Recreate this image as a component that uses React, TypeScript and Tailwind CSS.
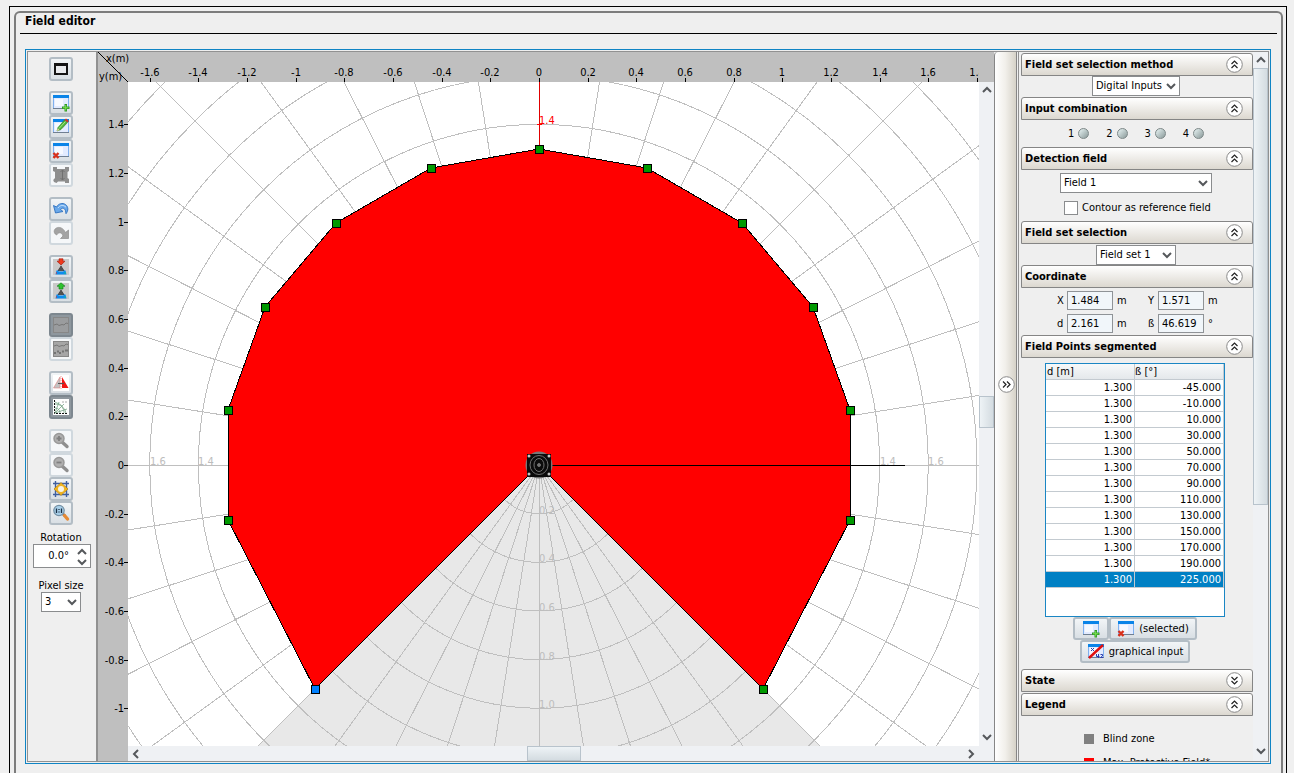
import { useState, type ReactNode } from "react"
import { clsx } from "clsx"

// pixels per metre, and the scanner position on the plot
const SCALE = 243.3
const CX = 411
const CY = 383

const POINT_ANGLES = [-45, -10, 10, 30, 50, 70, 90, 110, 130, 150, 170, 190, 225]
const RINGS = [0.2, 0.4, 0.6, 0.8, 1, 1.2, 1.4, 1.6, 1.8, 2, 2.2, 2.4]
const X_TICKS = [-1.6, -1.4, -1.2, -1, -0.8, -0.6, -0.4, -0.2, 0, 0.2, 0.4, 0.6, 0.8, 1, 1.2, 1.4, 1.6, 1.8]
const Y_TICKS = [1.4, 1.2, 1, 0.8, 0.6, 0.4, 0.2, 0, -0.2, -0.4, -0.6, -0.8, -1]

function polar(d: number, deg: number) {
  const a = (deg * Math.PI) / 180
  return [Math.round(CX + d * SCALE * Math.cos(a)), Math.round(CY - d * SCALE * Math.sin(a))]
}

/* ---------- icons ---------- */

function WindowIcon({ children }: { children?: ReactNode }) {
  return (
    <svg width="18" height="18" viewBox="0 0 18 18" aria-hidden="true">
      <rect x="1.5" y="2.5" width="15" height="12" fill="#e2ebff" stroke="#7fb0ee" />
      <rect x="3" y="5" width="8" height="7" fill="#fff" opacity=".7" />
      <rect x="1" y="1" width="16" height="3" fill="#0a84e8" />
      <rect x="1" y="14" width="16" height="1" fill="#6f7f92" />
      {children}
    </svg>
  )
}

function AddIcon() {
  return (
    <WindowIcon>
      <path d="M12.5 10H15v2.500h2.500V15H15v2.500h-2.500V15H10v-2.500h2.500z" fill="#2f9a25" />
      <path d="M13.2 11h1v2.200h2.300v1h-2.300v2.300h-1v-2.300H11v-1h2.200z" fill="#7be04f" />
    </WindowIcon>
  )
}

function EditIcon() {
  return (
    <WindowIcon>
      <path d="M5 13l1-3.500L12.500 2l3 2.500L9 11.500z" fill="#4fb53a" stroke="#2e7f24" strokeWidth=".6" />
      <path d="M7 10.500L13.500 3.500" stroke="#a6ea88" />
      <path d="M5 13l.8-2.500 1.700 1.400z" fill="#f4d8a0" />
      <path d="M12.500 2L14 .5l3 2.500-1.500 1.500z" fill="#cf3a2c" />
    </WindowIcon>
  )
}

function DeleteIcon() {
  return (
    <WindowIcon>
      <path d="M1.500 11l5 5M6.500 11l-5 5" stroke="#d8301c" strokeWidth="2.400" />
    </WindowIcon>
  )
}

function MaximizeIcon() {
  return (
    <svg width="18" height="18" viewBox="0 0 18 18" aria-hidden="true" shapeRendering="crispEdges">
      <rect x="4" y="5" width="10" height="8" fill="#e9ebee" />
      <path d="M2 3h14v12H2zM4 6v7h10V6z" fill="#151515" fillRule="evenodd" />
    </svg>
  )
}

function ResizeIcon() {
  return (
    <svg width="18" height="18" viewBox="0 0 18 18" aria-hidden="true">
      <path d="M1 1h4v2h8V1h4v4l-1.500 1v6l1.500 1v4h-4v-1.500H6L4.500 17 2 16l-.8-2L3 12V6L1 5z" fill="#8e8e8e" />
      <path d="M10.500 4v10M8.500 6l2-2 2 2M8.500 12l2 2 2-2" fill="none" stroke="#707070" />
    </svg>
  )
}

function UndoIcon() {
  return (
    <svg width="18" height="18" viewBox="0 0 18 18" aria-hidden="true">
      <path d="M1.500 5.500l2 7.500 7.500-1.500-2.500-2c1.500-2 4-1.800 5 1.200l.5 3c2.500-3 2.500-7-.5-9.200C10.500 2.500 6.500 3.500 4.500 7z" fill="#69a8ea" stroke="#2c6fbe" strokeWidth=".9" />
      <path d="M6 8c2-3 5.500-3.500 8-.8" fill="none" stroke="#c4e0fb" />
    </svg>
  )
}

function RedoIcon() {
  return (
    <svg width="18" height="18" viewBox="0 0 18 18" aria-hidden="true">
      <path d="M16.500 6v8.500H8.500l2.500-2.500C10 8.500 7 7.500 4.500 11 1.500 9 1.500 6 4 4.200c3-1.700 7-.7 9.500 4.300z" fill="#a3a3a3" stroke="#8c8c8c" strokeWidth=".7" />
    </svg>
  )
}

function DeviceIcon({ up }: { up?: boolean }) {
  return (
    <svg width="18" height="18" viewBox="0 0 18 18" aria-hidden="true">
      <rect x="1" y="1" width="16" height="16" fill="#c9c9c9" />
      {up ? (
        <path d="M9 .8l4 3.400h-2V7H7V4.200H5z" fill="#2fc32f" stroke="#0c7a14" strokeWidth=".6" />
      ) : (
        <path d="M7 .8h4v2.400h2L9 7 5 3.200h2z" fill="#ee3a1c" stroke="#a3180b" strokeWidth=".6" />
      )}
      <path d="M9 7.500L5.500 13h7z" fill="#222" />
      <path d="M7.500 10h3M6.500 12h5" stroke="#9a9a9a" strokeWidth=".8" />
      <path d="M4.500 12.500h2v1h5v-1h2l1 4h-11z" fill="#0c8cf0" />
      <path d="M4 15h1" stroke="#e22" />
      <path d="M12.500 15h1" stroke="#2e2" />
    </svg>
  )
}

function CurveIcon({ dots }: { dots?: boolean }) {
  return (
    <svg width="18" height="18" viewBox="0 0 18 18" aria-hidden="true">
      <rect x="1.500" y="1.500" width="15" height="15" fill={dots ? "#a6a6a6" : "#9a9c9e"} stroke="#878787" />
      <path d="M2 9l3-1 2 1.500 3-1 2 .500 2-2 2 .500" fill="none" stroke="#777" transform={dots ? "translate(0 -3)" : undefined} />
      {dots && <path d="M2 13h2M5 11.500h2M7 13h2M10 11.500h2M13 10.500h3" stroke="#747474" strokeWidth="2" />}
    </svg>
  )
}

function MirrorIcon() {
  return (
    <svg width="18" height="18" viewBox="0 0 18 18" aria-hidden="true">
      <rect x="1" y="1" width="16" height="16" fill="#fff" />
      <path d="M8 3v11H1.500z" fill="#c2c2c2" stroke="#e08080" strokeWidth=".6" />
      <path d="M10 3v11h6.500z" fill="#f01414" />
      <path d="M6 9.500h6" stroke="#555" />
      <path d="M9 2v14" stroke="#e99" strokeDasharray="1 1" />
    </svg>
  )
}

function ScanGridIcon() {
  return (
    <svg width="18" height="18" viewBox="0 0 18 18" aria-hidden="true">
      <rect x="1" y="1" width="16" height="16" fill="#fff" />
      <path d="M2.500 2v13.500H16" fill="none" stroke="#111" strokeDasharray="2 1" />
      <path d="M3 15L15 11M3 15L12 6M3 15L7 4M3 6c6 0 9 4 9 9M3 10c3 0 5 2 5 5M3 4l6 3 4 5 1 3" fill="none" stroke="#7aa688" strokeWidth=".8" />
      <path d="M10 4h5" stroke="#aaa" strokeDasharray="2 1" />
    </svg>
  )
}

function ZoomGlyph({ sign }: { sign: "plus" | "minus" }) {
  return (
    <svg width="18" height="18" viewBox="0 0 18 18" aria-hidden="true">
      <path d="M10 10l5 4.500" stroke="#8f8f8f" strokeWidth="3.400" strokeLinecap="round" />
      <circle cx="7" cy="6.500" r="5" fill="#b0b0b0" stroke="#999" strokeWidth="1.500" />
      <path d={sign === "plus" ? "M7 4v5M4.500 6.500h5" : "M4.500 6.500h5"} stroke="#808080" strokeWidth="1.800" />
    </svg>
  )
}

function FitIcon() {
  return (
    <svg width="18" height="18" viewBox="0 0 18 18" aria-hidden="true">
      <path d="M3.500 1v16M14.500 1v16M1 3.500h16M1 14.500h16" stroke="#3f5f9f" strokeWidth="1.400" />
      <path d="M9 2.500L11.500 5l2 1.500L16 9l-2.500 2.500-2 1.500L9 15.500 6.500 13l-2-1.500L2 9l2.500-2.500 2-1.500z" fill="#f0b420" stroke="#a87408" strokeWidth=".6" />
      <circle cx="9" cy="9" r="3" fill="#f6f3e6" />
    </svg>
  )
}

function ActualSizeIcon() {
  return (
    <svg width="18" height="18" viewBox="0 0 18 18" aria-hidden="true">
      <path d="M11 10l2 2" stroke="#666" strokeWidth="2.500" />
      <path d="M12.500 11.500l3 3.500" stroke="#e58a35" strokeWidth="3.400" strokeLinecap="round" />
      <circle cx="7" cy="6.500" r="5.200" fill="#a7cfe9" stroke="#7490a4" strokeWidth="1.200" />
      <path d="M4.500 4.500v4.500M9.500 4.500v4.500M7 5v1M7 7.500v1" stroke="#1b2f44" strokeWidth="1.300" />
    </svg>
  )
}

function GraphicalIcon() {
  return (
    <WindowIcon>
      <path d="M4 5l3 3M7 5L4 8M11.500 11v4M9.500 11v2.500h3M13.500 11.500h2v1.500l-2 1.500h2.500" fill="none" stroke="#2b3fae" />
      <path d="M2 15L16 2" stroke="#e01010" strokeWidth="2.400" />
    </WindowIcon>
  )
}

function Chevron({ dir }: { dir: "up" | "down" | "left" | "right" }) {
  const d = {
    up: "M2 8l4-4 4 4",
    down: "M2 4l4 4 4-4",
    left: "M8 2L4 6l4 4",
    right: "M4 2l4 4-4 4",
  }[dir]
  return (
    <svg width="12" height="12" viewBox="0 0 12 12" aria-hidden="true">
      <path d={d} fill="none" stroke="#55585b" strokeWidth="2" />
    </svg>
  )
}

function DoubleChevron({ turn }: { turn: 0 | 90 | 180 }) {
  return (
    <svg width="17" height="17" viewBox="0 0 17 17" aria-hidden="true">
      <circle cx="8.500" cy="8.500" r="7.800" fill="#fff" stroke="#8a8a8a" />
      <path d="M5.500 8l3-3 3 3M5.500 12l3-3 3 3" fill="none" stroke="#222" strokeWidth="1.200" transform={`rotate(${turn} 8.5 8.5)`} />
    </svg>
  )
}

/* ---------- controls ---------- */

type ToolProps = { label: string; icon: ReactNode; pressed?: boolean; disabled?: boolean }

function ToolButton({ label, icon, pressed, disabled }: ToolProps) {
  return (
    <button
      type="button"
      aria-label={label}
      disabled={disabled}
      aria-pressed={pressed}
      className={clsx(
        "flex size-6 items-center justify-center rounded-[3px] border-2",
        pressed && "border-[#7d878f] bg-[#8e979e]",
        !pressed && disabled && "border-[#d0d8de] bg-[#f5f7f9]",
        !pressed && !disabled && "border-[#b3bdc5] bg-linear-to-b from-[#f2f5f7] to-[#d9dfe4]",
      )}
    >
      {icon}
    </button>
  )
}

function Select({ id, label, value, className }: { id: string; label: string; value: string; className: string }) {
  return (
    <div className={clsx("relative h-5", className)}>
      <select id={id} aria-label={label} className="block size-full appearance-none border border-[#8a8c8e] bg-white pl-[3px] text-[11px]">
        <option>{value}</option>
      </select>
      <span className="pointer-events-none absolute top-1 right-[3px]">
        <Chevron dir="down" />
      </span>
    </div>
  )
}

function Section({ title, defaultOpen = true, children }: { title: string; defaultOpen?: boolean; children?: ReactNode }) {
  const [open, setOpen] = useState(defaultOpen)
  return (
    <section>
      <button
        type="button"
        aria-expanded={open}
        onClick={() => setOpen(!open)}
        className="flex h-[23px] w-full items-center justify-between rounded-t-[3px] border border-[#858585] bg-linear-to-b from-white to-[#dcd8d0] pr-[9px] pl-[3px] text-left text-[11px] font-bold"
      >
        {title}
        <DoubleChevron turn={open ? 0 : 180} />
      </button>
      {open && <div className="pr-0.5">{children}</div>}
    </section>
  )
}

function CoordField({ id, label, value, unit }: { id: string; label: string; value: string; unit: string }) {
  return (
    <div className="flex h-[19px] items-center">
      <label htmlFor={id} className="w-3 pl-0.5">{label}</label>
      <input id={id} readOnly defaultValue={value} className="h-[19px] w-[46px] border border-[#8f9397] bg-[#f1f6fa] px-[3px] text-[11px]" />
      <span className="w-[33px] pl-1">{unit}</span>
    </div>
  )
}

/* ---------- panels ---------- */

const TOOL_GROUPS: ToolProps[][] = [
  [{ label: "Maximize", icon: <MaximizeIcon /> }],
  [
    { label: "Add field", icon: <AddIcon /> },
    { label: "Edit field", icon: <EditIcon /> },
    { label: "Delete field", icon: <DeleteIcon /> },
    { label: "Resize", icon: <ResizeIcon />, disabled: true },
  ],
  [
    { label: "Undo", icon: <UndoIcon /> },
    { label: "Redo", icon: <RedoIcon />, disabled: true },
  ],
  [
    { label: "Download to device", icon: <DeviceIcon /> },
    { label: "Upload from device", icon: <DeviceIcon up /> },
  ],
  [
    { label: "Show contour", icon: <CurveIcon />, pressed: true, disabled: true },
    { label: "Show reference contour", icon: <CurveIcon dots />, disabled: true },
  ],
  [
    { label: "Mirror", icon: <MirrorIcon /> },
    { label: "Show grid", icon: <ScanGridIcon />, pressed: true },
  ],
  [
    { label: "Zoom in", icon: <ZoomGlyph sign="plus" />, disabled: true },
    { label: "Zoom out", icon: <ZoomGlyph sign="minus" />, disabled: true },
    { label: "Fit to window", icon: <FitIcon /> },
    { label: "Actual size", icon: <ActualSizeIcon /> },
  ],
]

function Toolbar() {
  return (
    <div className="flex w-[70px] shrink-0 flex-col items-center border-r-2 border-[#919191] pt-[5px]">
      <div className="flex flex-col gap-2.5 pr-0.5">
        {TOOL_GROUPS.map((group, i) => (
          <div key={i} className="flex flex-col">
            {group.map((tool) => (
              <ToolButton key={tool.label} {...tool} />
            ))}
          </div>
        ))}
      </div>
      <label htmlFor="rotation" className="mt-[7px] pr-0.5 leading-3">Rotation</label>
      <div className="flex h-6 w-[58px] border border-[#8a8c8e] bg-white">
        <input id="rotation" defaultValue="0.0°" className="w-[35px] min-w-0 bg-transparent text-right text-[11px]" />
        <div className="flex flex-1 flex-col items-center justify-center pl-1">
          <button type="button" aria-label="Increase rotation" className="h-2.5"><Chevron dir="up" /></button>
          <button type="button" aria-label="Decrease rotation" className="h-2.5"><Chevron dir="down" /></button>
        </div>
      </div>
      <label htmlFor="pixel-size" className="mt-3 pr-0.5 leading-3">Pixel size</label>
      <Select id="pixel-size" label="Pixel size" value="3" className="mr-0.5 w-10" />
    </div>
  )
}

function TopRuler() {
  return (
    <div className="pr-[15px]">
      <svg className="h-[30px] w-full overflow-hidden" fontSize="11" aria-label="x axis">
        {X_TICKS.map((t) => {
          const x = 30 + CX + Math.round(t * SCALE)
          return (
            <g key={t}>
              <text x={x} y="24" textAnchor="middle">{t}</text>
              <rect x={x} y="26" width="1" height="4" />
            </g>
          )
        })}
        <path d="M0 0l30 30" stroke="#000" shapeRendering="crispEdges" />
        <text x="8" y="10">x(m)</text>
        <text x="1" y="28">y(m)</text>
      </svg>
    </div>
  )
}

function LeftRuler() {
  return (
    <svg className="h-full w-[30px] shrink-0" fontSize="11" aria-label="y axis">
      {Y_TICKS.map((t) => {
        const y = CY - Math.round(t * SCALE)
        return (
          <g key={t}>
            <text x="26" y={y + 4} textAnchor="end">{t}</text>
            <rect x="26" y={y} width="4" height="1" />
          </g>
        )
      })}
    </svg>
  )
}

function Plot() {
  const points = POINT_ANGLES.map((a) => polar(1.3, a))
  const outline = [[CX, CY], ...points].map((p) => p.join(",")).join(" ")
  const wedge = [[CX, CY], polar(4, -45), polar(4, 225)].map((p) => p.join(",")).join(" ")
  return (
    <svg className="size-full bg-white" fontSize="11" aria-label="Field">
      <g shapeRendering="crispEdges">
        <polygon points={wedge} fill="#e8e8e8" />
        <g fill="none" stroke="#bfbfbf">
          {RINGS.map((r) => (
            <circle key={r} cx={CX} cy={CY} r={r * SCALE} />
          ))}
          {Array.from({ length: 40 }, (_, i) => polar(3, i * 9)).map(([x, y], i) => (
            <line key={i} x1={CX} y1={CY} x2={x} y2={y} />
          ))}
        </g>
      </g>
      <g fill="#bdbdbd">
        {[0.2, 0.4, 0.6, 0.8, 1].map((r) => (
          <text key={r} x={CX} y={CY + Math.round(r * SCALE)}>{r.toFixed(1)}</text>
        ))}
        {[-1.6, -1.4, 1.4, 1.6].map((r) => (
          <text key={r} x={CX + Math.round(r * SCALE)} y={CY}>{Math.abs(r)}</text>
        ))}
      </g>
      <g shapeRendering="crispEdges">
        <polygon points={outline} fill="#f00" stroke="#000" />
        <path d={`M${CX} 0V68`} stroke="#e00000" />
        <path d={`M${CX - 2} 42h5`} stroke="#f00" />
        <path d={`M${CX} ${CY}H777`} stroke="#000" />
        {points.map(([x, y], i) => (
          <rect key={i} x={x - 4} y={y - 4} width="8" height="8" fill={i === points.length - 1 ? "#0080ff" : "#009900"} stroke="#000" />
        ))}
      </g>
      <text x={CX} y="42" fill="#f00">1.4</text>
      <g transform={`translate(${CX} ${CY})`}>
        <circle r="13.500" fill="#777" />
        <rect x="-12" y="-11" width="24" height="23" fill="#0b0b0b" />
        <g fill="none" stroke="#707070">
          <ellipse rx="9" ry="9.500" />
          <ellipse rx="5" ry="6.500" />
          <circle r="1.500" fill="#777" />
        </g>
        <g fill="#c4c4c4">
          <circle cx="-10" cy="-9" r="1.500" />
          <circle cx="10" cy="-9" r="1.500" />
          <circle cx="-10" cy="9" r="1.500" />
          <circle cx="10" cy="9" r="1.500" />
        </g>
      </g>
    </svg>
  )
}

function FieldCanvas() {
  return (
    <div className="flex min-w-0 flex-1 flex-col bg-[#bfbfbf]">
      <TopRuler />
      <div className="flex min-h-0 flex-1">
        <LeftRuler />
        <div className="flex min-w-0 flex-1 flex-col">
          <div className="min-h-0 flex-1 overflow-hidden">
            <Plot />
          </div>
          <div className="flex h-[15px] items-center justify-between bg-[#eff1f4] px-0.5">
            <Chevron dir="left" />
            <div className="h-full w-[54px] border border-[#b8c3cc] bg-linear-to-b from-[#eef3f6] to-[#d4dce1]" />
            <Chevron dir="right" />
          </div>
        </div>
        <div className="flex w-[15px] shrink-0 flex-col items-center justify-between bg-[#eff1f4] pt-0.5 pb-[18px]">
          <Chevron dir="up" />
          <div className="mb-1 h-8 w-full border border-[#b8c3cc] bg-linear-to-r from-[#eef3f6] to-[#d4dce1]" />
          <Chevron dir="down" />
        </div>
      </div>
    </div>
  )
}

function PointsTable() {
  return (
    <div className="mx-auto mt-[5px] h-[254px] w-[180px] border border-[#1a86c4] bg-white">
      <table className="w-full table-fixed border-separate border-spacing-0 leading-[15px]">
        <thead>
          <tr className="bg-linear-to-b from-[#f7f9fa] to-[#e3e7ea] text-left">
            <th className="h-4 border-r border-b border-[#c3cad0] p-0 pl-px font-normal">d [m]</th>
            <th className="h-4 border-r border-b border-[#c3cad0] p-0 font-normal">ß [°]</th>
          </tr>
        </thead>
        <tbody>
          {POINT_ANGLES.map((a) => (
            <tr key={a} className={clsx(a === 225 && "bg-[#0080c4] text-white")}>
              <td className="h-4 border-r border-b border-[#c3cad0] p-0 pr-0.5 text-right">1.300</td>
              <td className="h-4 border-r border-b border-[#c3cad0] p-0 pr-0.5 text-right">{a.toFixed(3)}</td>
            </tr>
          ))}
        </tbody>
      </table>
    </div>
  )
}

const pushButton =
  "flex h-[23px] items-center justify-center gap-1 rounded-[3px] border-2 border-[#b3bdc5] bg-linear-to-b from-[#f2f5f7] to-[#d9dfe4]"

function SidePanel() {
  return (
    <div className="flex w-[250px] shrink-0 border-l border-[#919191] pl-0.5">
      <div className="min-w-0 flex-1 overflow-hidden pt-px">
        <Section title="Field set selection method">
          <Select id="method" label="Field set selection method" value="Digital Inputs" className="mx-auto mb-px w-[88px]" />
        </Section>
        <Section title="Input combination">
          <div className="flex h-[27px] items-center justify-center gap-[17px]">
            {[1, 2, 3, 4].map((n) => (
              <label key={n} className="flex items-center gap-1">
                {n}
                <input type="radio" name={`input-${n}`} className="size-[11px] appearance-none rounded-full border border-[#7d8888] bg-linear-to-br from-[#e9f5f5] to-[#8b9a9a]" />
              </label>
            ))}
          </div>
        </Section>
        <Section title="Detection field">
          <Select id="field" label="Detection field" value="Field 1" className="mx-auto mt-[3px] w-[152px]" />
          <label className="mt-2 mb-1.5 flex h-3.5 items-center gap-1 pl-[43px]">
            <input type="checkbox" className="size-3.5 appearance-none border border-[#8a8c8e] bg-white" />
            Contour as reference field
          </label>
        </Section>
        <Section title="Field set selection">
          <Select id="field-set" label="Field set selection" value="Field set 1" className="mx-auto mt-px w-20" />
        </Section>
        <Section title="Coordinate">
          <div className="grid grid-cols-[91px_91px] gap-y-1 pt-[3px] pb-0.5 pl-[34px]">
            <CoordField id="coord-x" label="X" value="1.484" unit="m" />
            <CoordField id="coord-y" label="Y" value="1.571" unit="m" />
            <CoordField id="coord-d" label="d" value="2.161" unit="m" />
            <CoordField id="coord-b" label="ß" value="46.619" unit="°" />
          </div>
        </Section>
        <Section title="Field Points segmented">
          <div className="pr-0.5 pb-1.5">
            <PointsTable />
            <div className="flex justify-center">
              <button type="button" aria-label="Add point" className={clsx(pushButton, "w-9")}>
                <AddIcon />
              </button>
              <button type="button" className={clsx(pushButton, "w-[88px]")}>
                <DeleteIcon />
                (selected)
              </button>
            </div>
            <button type="button" className={clsx(pushButton, "mx-auto w-[110px]")}>
              <GraphicalIcon />
              graphical input
            </button>
          </div>
        </Section>
        <Section title="State" defaultOpen={false} />
        <div className="h-px" />
        <Section title="Legend">
          <ul className="flex flex-col gap-2 pt-[15px] pl-[63px]">
            <li className="flex h-4 items-center gap-[9px]">
              <span className="size-2.5 bg-[#808080]" />
              Blind zone
            </li>
            <li className="flex h-4 items-center gap-[9px]">
              <span className="size-2.5 bg-[#ff0000]" />
              Max. Protective Field*
            </li>
          </ul>
        </Section>
      </div>
      <div className="flex w-[15px] shrink-0 flex-col items-center bg-[#eff1f4] pt-0.5 pb-1">
        <Chevron dir="up" />
        <div className="mt-0.5 h-[437px] w-full border border-[#b8c3cc] bg-linear-to-r from-[#eef3f6] to-[#d4dce1]" />
        <div className="mt-auto">
          <Chevron dir="down" />
        </div>
      </div>
    </div>
  )
}

export default function App() {
  return (
    <div className="h-screen overflow-hidden bg-[#f0f0f0] pt-1.5 pr-[7px] pl-[9px] font-['DejaVu_Sans_Condensed','DejaVu_Sans',sans-serif] text-[11px] leading-4 text-black">
      <div className="h-full border-x border-t border-black bg-[#efefef] px-[3px] pt-1 pl-1">
        <main className="flex h-full flex-col rounded-t-md border-2 border-b-0 border-[#7c7c7c] px-1">
          <h1 className="h-[21px] border-b border-black pl-[5px] text-[12px] leading-4 font-bold">Field editor</h1>
          <div className="mr-1.5 mt-[15px] mb-[9px] ml-[5px] flex min-h-0 flex-1 border border-[#0f84c4] p-px">
            <div className="flex min-w-0 flex-1 border border-[#919191]">
              <Toolbar />
              <FieldCanvas />
              <div className="flex w-[23px] shrink-0 items-center justify-center rounded-tl border-x border-[#868686] bg-linear-to-r from-white via-[#f1efea] to-[#d6d2c8] pb-11 pl-0.5">
                <button type="button" aria-label="Hide side panel">
                  <DoubleChevron turn={90} />
                </button>
              </div>
              <div className="w-px shrink-0" />
              <SidePanel />
            </div>
          </div>
        </main>
      </div>
    </div>
  )
}
